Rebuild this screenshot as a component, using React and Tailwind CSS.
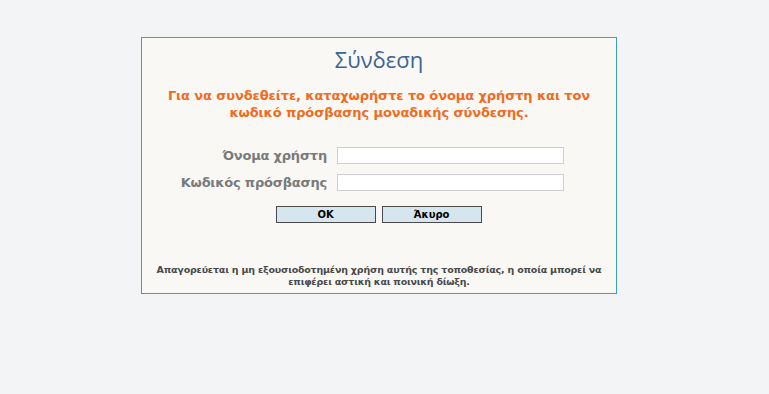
import React from "react";

export default function App() {
  return (
    <div className="min-h-screen w-full bg-[#f3f4f6] pt-[37px] font-['DejaVu_Sans',Verdana,sans-serif]">
      <div className="ml-[141px] w-[476px] h-[257px] border border-[#3a9fc1] bg-[#f9f8f5] flex flex-col items-center">
        <h1 className="mt-[6px] text-[22px] leading-[30px] text-[#3b6592] font-['Open_Sans','Noto_Sans',sans-serif]">
          Σύνδεση
        </h1>
        <p className="mt-[13px] text-center text-[13px] leading-[17px] font-bold text-[#f26b1d] tracking-[-0.1px]">
          Για να συνδεθείτε, καταχωρήστε το όνομα χρήστη και τον
          <br />
          κωδικό πρόσβασης μοναδικής σύνδεσης.
        </p>

        <div className="mt-[26px] self-start grid grid-cols-[185px_227px] gap-x-[10px] gap-y-[10px] items-center">
          <label className="text-right text-[13px] leading-[17px] font-bold text-[#7a7a7a] tracking-[-0.2px]">
            Όνομα χρήστη
          </label>
          <input className="h-[17px] border border-[#cfcfcf] bg-white outline-none" />
          <label className="text-right text-[13px] leading-[17px] font-bold text-[#7a7a7a] tracking-[-0.2px]">
            Κωδικός πρόσβασης
          </label>
          <input
            type="password"
            className="h-[17px] border border-[#cfcfcf] bg-white outline-none"
          />
        </div>

        <div className="mt-[15px] flex gap-[6px] ml-[-1px]">
          <button className="w-[100px] h-[17px] border border-[#4a4a4a] bg-[#d6e6ee] text-[10px] leading-[15px] font-bold text-black">
            OK
          </button>
          <button className="w-[100px] h-[17px] border border-[#4a4a4a] bg-[#d6e6ee] text-[10px] leading-[15px] font-bold text-black">
            Άκυρο
          </button>
        </div>

        <p className="mt-auto mb-[5px] text-center text-[9.5px] leading-[12px] font-bold text-[#4a4a4a] whitespace-nowrap tracking-[-0.2px]">
          Απαγορεύεται η μη εξουσιοδοτημένη χρήση αυτής της τοποθεσίας, η οποία μπορεί να
          <br />
          επιφέρει αστική και ποινική δίωξη.
        </p>
      </div>
    </div>
  );
}
